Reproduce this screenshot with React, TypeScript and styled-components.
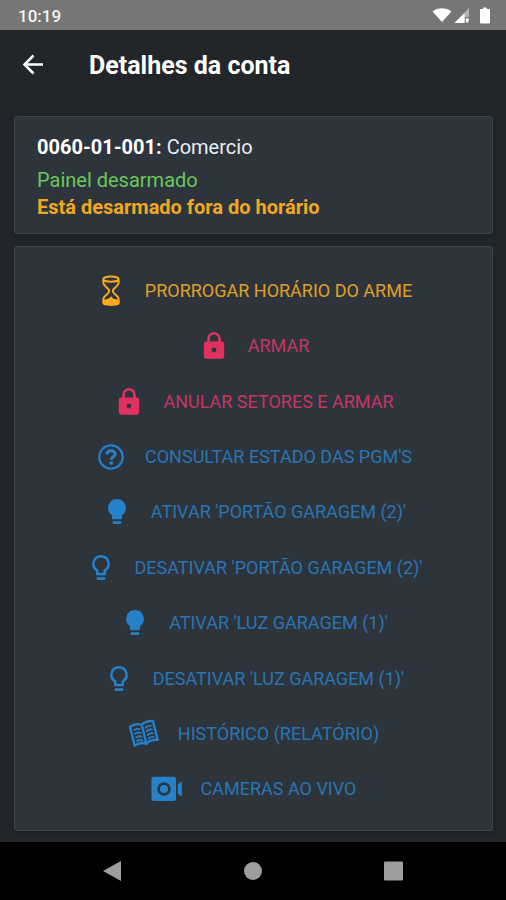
import React from "react";
import styled, { createGlobalStyle } from "styled-components";

const GlobalStyle = createGlobalStyle`
  *, *::before, *::after { box-sizing: border-box; }
  body { margin: 0; background: #22262b; font-family: Roboto, sans-serif; }
`;

type Tone = "warning" | "danger" | "info";

const tones: Record<Tone, { icon: string; text: string }> = {
  warning: { icon: "#f9ab19", text: "#e0a026" },
  danger: { icon: "#e3315f", text: "#c43662" },
  info: { icon: "#2581ca", text: "#2a74b2" },
};

const Screen = styled.div`
  display: flex;
  flex-direction: column;
  min-height: 100vh;
  background: #22262b;
  color: #ffffff;
`;

const StatusBar = styled.div`
  display: flex;
  align-items: center;
  justify-content: space-between;
  height: 30px;
  padding: 2px 15px 0 18px;
  background: #767676;
  font-size: 17px;
  font-weight: 500;
  line-height: 24px;
  color: #f4f4f4;
`;

const StatusIcons = styled.div`
  display: flex;
  align-items: center;
  gap: 2px;
`;

const Header = styled.header`
  display: flex;
  align-items: center;
  gap: 40px;
  height: 70px;
  padding: 0 16px;
`;

const BackButton = styled.button`
  display: flex;
  padding: 0;
  border: 0;
  background: none;
  color: #ffffff;
  cursor: pointer;
`;

const Title = styled.h1`
  margin: 0;
  padding-top: 2px;
  font-size: 25px;
  font-weight: 700;
  line-height: 32px;
`;

const Content = styled.main`
  display: flex;
  flex: 1;
  flex-direction: column;
  gap: 12px;
  padding: 16px 13px 11px 14px;
`;

const Card = styled.section`
  border: 1px solid #3d464f;
  border-radius: 3px;
  background: #2d343c;
  box-shadow: 0 2px 4px #1b1f27;
`;

const AccountCard = styled(Card)`
  padding: 16px 22px 12px;
  font-size: 20px;
`;

const AccountLine = styled.p`
  margin: 0 0 6px;
  line-height: 28px;
  color: #e9edf2;

  strong {
    color: #ffffff;
  }
`;

const StatusLine = styled.p<{ $alert?: boolean }>`
  margin: 0;
  line-height: 27px;
  font-weight: ${(p) => (p.$alert ? 700 : 400)};
  color: ${(p) => (p.$alert ? "#f0a824" : "#6cc65c")};
`;

const ActionCard = styled(Card)`
  display: flex;
  flex: 1;
  flex-direction: column;
  padding: 16px 0 13px;
`;

const ActionButton = styled.button<{ $tone: Tone }>`
  display: flex;
  flex: 1;
  align-items: center;
  justify-content: center;
  gap: 18px;
  min-height: 48px;
  padding: 0;
  border: 0;
  background: none;
  font-family: inherit;
  font-size: 18px;
  line-height: 24px;
  text-transform: uppercase;
  color: ${(p) => tones[p.$tone].text};
  cursor: pointer;

  svg {
    width: 32px;
    height: 32px;
    color: ${(p) => tones[p.$tone].icon};
  }
`;

const SystemNav = styled.nav`
  display: flex;
  align-items: center;
  justify-content: space-around;
  height: 58px;
  padding: 0 42px;
  background: #000000;
`;

const NavButton = styled.button`
  display: flex;
  padding: 0;
  border: 0;
  background: none;
  color: #9e9e9e;
  cursor: pointer;
`;

const Hourglass = () => (
  <svg viewBox="0 0 32 32" fill="none" stroke="currentColor" aria-hidden="true">
    <ellipse cx="16" cy="4.2" rx="7.6" ry="2.6" strokeWidth="2" />
    <path d="M8.4 4.500v3.500c0 3.500 5.800 5 5.800 8s-5.800 4.500-5.800 8v3M23.600 4.500v3.500c0 3.500-5.800 5-5.800 8s5.800 4.500 5.800 8v3" strokeWidth="2" />
    <path d="M7.400 26.200c1-1.500 4-2.300 6.500-2.700l2.100-2.200 2.100 2.200c2.500.4 5.500 1.200 6.500 2.700v2.300C24.600 30.200 20 30.900 16 30.900s-8.600-.7-8.600-2.400z" fill="currentColor" stroke="none" />
  </svg>
);

const Lock = () => (
  <svg viewBox="-1 -1 26 26" fill="currentColor" aria-hidden="true">
    <path fillRule="evenodd" d="M18.500 8.300h-1V6.100a5.500 5.500 0 0 0-11 0v2.200h-1c-1 0-1.800.8-1.800 1.800v10.400c0 1 .8 1.800 1.800 1.800h13c1 0 1.800-.8 1.800-1.800V10.100c0-1-.8-1.800-1.800-1.800zM12 17.200a2 2 0 1 1 0-4 2 2 0 0 1 0 4zM15.400 8.300H8.600V6.100a3.400 3.400 0 0 1 6.800 0z" />
  </svg>
);

const Help = () => (
  <svg viewBox="0 0 32 32" fill="none" stroke="currentColor" aria-hidden="true">
    <circle cx="16" cy="16" r="11.700" strokeWidth="2.200" />
    <path d="M11.800 13.300c.2-2.400 1.900-3.500 4.200-3.500s4.200 1.200 4.200 3.200c0 2.500-3.900 2.700-3.900 5.700" strokeWidth="3" />
    <path d="M16.200 20.400v3.200" strokeWidth="3.400" />
  </svg>
);

const Bulb = ({ outline = false }: { outline?: boolean }) => (
  <svg viewBox="-1 -1 26 26" fill="currentColor" aria-hidden="true">
    <path d="M8.500 19.500h7v1.300c0 .6-.4 1-1 1h-5c-.6 0-1-.4-1-1z" />
    {outline ? (
      <path d="M12 1.500a7.200 7.200 0 0 0-4.100 13.100v2.200c0 .6.400 1 1 1h6.200c.6 0 1-.4 1-1v-2.200A7.200 7.200 0 0 0 12 1.500zm2.900 11.400-.9.700v2.300h-4v-2.300l-.9-.7a5.200 5.200 0 1 1 5.800 0z" />
    ) : (
      <path d="M12 1.500a7.200 7.200 0 0 0-4.100 13.100v2.200c0 .6.400 1 1 1h6.200c.6 0 1-.4 1-1v-2.200A7.200 7.200 0 0 0 12 1.500z" />
    )}
  </svg>
);

const Book = () => (
  <svg viewBox="0 0 32 32" fill="none" stroke="currentColor" strokeLinejoin="round" strokeLinecap="round" aria-hidden="true">
    <g transform="rotate(-14 16 16)">
      <path d="M16 6.500c-3-2.300-8.500-2.500-11.800-.7V25c3.500-1.500 8.800-1.300 11.800 1.200 3-2.500 8.300-2.700 11.800-1.200V5.800c-3.300-1.800-8.800-1.600-11.800.7zV26" strokeWidth="2.400" />
      <path d="M7.500 9.800c2-.8 3.800-.6 5.300.5M7.500 13.600c2-.8 3.800-.6 5.300.5M7.500 17.400c2-.8 3.800-.6 5.300.5M7.500 21.200c2-.8 3.800-.6 5.300.5M24.500 9.800c-2-.8-3.800-.6-5.300.5M24.500 13.600c-2-.8-3.800-.6-5.300.5M24.500 17.400c-2-.8-3.800-.6-5.300.5M24.500 21.200c-2-.8-3.800-.6-5.300.5" strokeWidth="1.900" />
    </g>
  </svg>
);

const Camera = () => (
  <svg viewBox="0 0 32 32" fill="currentColor" aria-hidden="true">
    <path fillRule="evenodd" d="M3 3.800h19.500A2.500 2.500 0 0 1 25 6.300v19.200a2.500 2.500 0 0 1-2.500 2.500H3A2.500 2.500 0 0 1 .5 25.500V6.300A2.500 2.500 0 0 1 3 3.800zM13 9.200a6.800 6.800 0 1 0 0 13.600A6.800 6.800 0 0 0 13 9.200z" />
    <circle cx="13" cy="16" r="4" />
    <path d="M26.800 11.500l4-3.300v15.600l-4-3.300z" />
  </svg>
);

const actions: { label: string; tone: Tone; icon: React.ReactNode }[] = [
  { label: "Prorrogar horário do arme", tone: "warning", icon: <Hourglass /> },
  { label: "Armar", tone: "danger", icon: <Lock /> },
  { label: "Anular setores e armar", tone: "danger", icon: <Lock /> },
  { label: "Consultar estado das PGM'S", tone: "info", icon: <Help /> },
  { label: "Ativar 'Portão Garagem (2)'", tone: "info", icon: <Bulb /> },
  { label: "Desativar 'Portão Garagem (2)'", tone: "info", icon: <Bulb outline /> },
  { label: "Ativar 'Luz Garagem (1)'", tone: "info", icon: <Bulb /> },
  { label: "Desativar 'Luz Garagem (1)'", tone: "info", icon: <Bulb outline /> },
  { label: "Histórico (relatório)", tone: "info", icon: <Book /> },
  { label: "Cameras ao vivo", tone: "info", icon: <Camera /> },
];

export default function App() {
  return (
    <Screen>
      <GlobalStyle />
      <StatusBar>
        <time>10:19</time>
        <StatusIcons>
          <svg width="20" height="18" viewBox="0 0 20 18" fill="#fff" aria-hidden="true">
            <path d="M.5 4.500c5.500-4.200 13.500-4.200 19 0L10 15z" />
          </svg>
          <svg width="17" height="18" viewBox="0 0 17 18" aria-hidden="true">
            <path d="M15 1v9h-4v6H.5z" fill="#b5b5b5" />
            <path d="M10.500 6v10H.5z" fill="#fff" />
            <path d="M11.500 11.500H15l-.8 4h-2z" fill="#fff" />
          </svg>
          <svg width="18" height="18" viewBox="0 0 18 18" fill="#fff" aria-hidden="true">
            <path d="M10.500 1h3v1.500H16.500V16h-9V2.500h3z" stroke="#fff" strokeLinejoin="round" />
          </svg>
        </StatusIcons>
      </StatusBar>
      <Header>
        <BackButton aria-label="Voltar">
          <svg width="33" height="32" viewBox="0 0 33 32" fill="none" stroke="currentColor" strokeWidth="2.500" aria-hidden="true">
            <path d="M27 15.500H8.500M17.500 6.500L8.500 15.500l9 9" />
          </svg>
        </BackButton>
        <Title>Detalhes da conta</Title>
      </Header>
      <Content>
        <AccountCard>
          <AccountLine>
            <strong>0060-01-001:</strong> Comercio
          </AccountLine>
          <StatusLine>Painel desarmado</StatusLine>
          <StatusLine $alert>Está desarmado fora do horário</StatusLine>
        </AccountCard>
        <ActionCard>
          {actions.map((action) => (
            <ActionButton key={action.label} $tone={action.tone}>
              {action.icon}
              <span>{action.label}</span>
            </ActionButton>
          ))}
        </ActionCard>
      </Content>
      <SystemNav>
        <NavButton aria-label="Anterior">
          <svg width="20" height="22" viewBox="0 0 20 22" fill="currentColor" aria-hidden="true">
            <path d="M19 1v20L1 11z" />
          </svg>
        </NavButton>
        <NavButton aria-label="Início">
          <svg width="20" height="20" viewBox="0 0 20 20" fill="currentColor" aria-hidden="true">
            <circle cx="10" cy="10" r="9" />
          </svg>
        </NavButton>
        <NavButton aria-label="Recentes">
          <svg width="20" height="20" viewBox="0 0 20 20" fill="currentColor" aria-hidden="true">
            <rect width="19" height="19" x="0" y=".5" rx="1" />
          </svg>
        </NavButton>
      </SystemNav>
    </Screen>
  );
}
